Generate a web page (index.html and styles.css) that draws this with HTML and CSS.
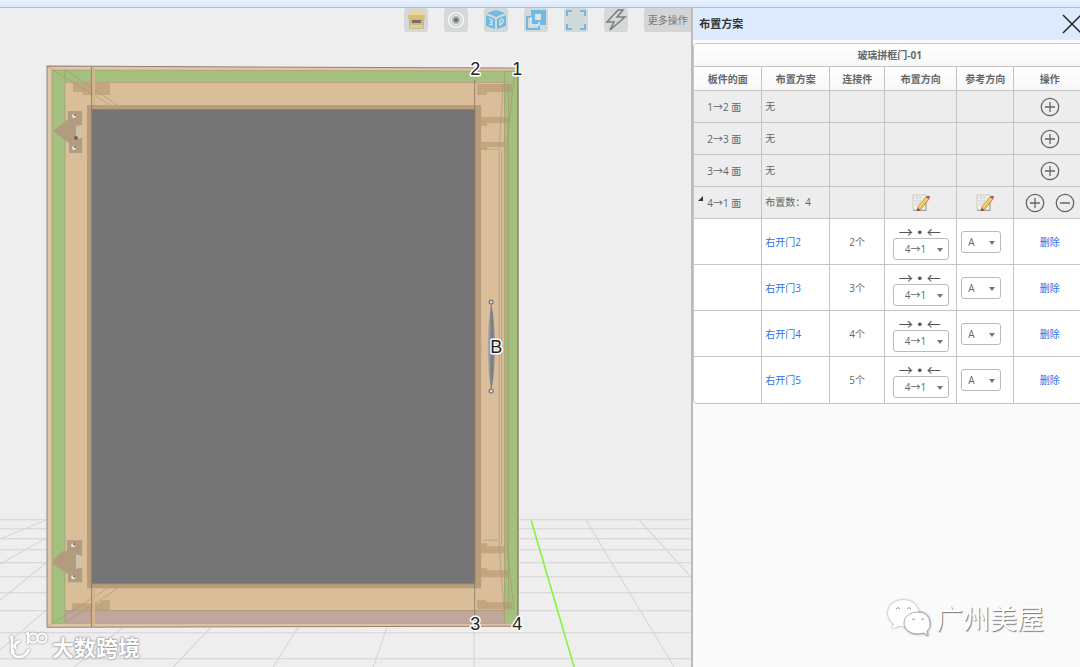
FILE: index.html
```html
<!doctype html>
<html lang="zh-CN">

<head>
    <meta charset="UTF-8" />
    <meta name="viewport" content="width=device-width, initial-scale=1.0" />
    <title>布置方案</title>
    <link rel="stylesheet" href="styles.css">
</head>

<body>
    <!-- shared symbols -->
    <svg class="symbols" aria-hidden="true">
        <symbol id="icon-plus" viewBox="0 0 20 20">
            <circle cx="10" cy="10" r="8.7" />
            <path d="M10 5v10M5 10h10" />
        </symbol>
        <symbol id="icon-minus" viewBox="0 0 20 20">
            <circle cx="10" cy="10" r="8.7" />
            <path d="M5 10h10" />
        </symbol>
        <symbol id="icon-edit" viewBox="0 0 20 20">
            <path d="M2 2h13v15H2z" fill="#f1f1ef" stroke="#c6c6c4" />
            <path d="M2 17.500h13M15 7v11" stroke="#a0a09e" />
            <path d="M3 5h9M3 8h8M3 11h6M6 3v11M9 3v8" stroke="#d6d6d4" />
            <path d="M7 14l8-10 3 2-8 10-4 2z" fill="#efc34f" stroke="#a98235" stroke-width=".8" />
            <path d="M8 14l8-9" stroke="#fbe69a" />
            <path d="M15 4l1-1q2-1 3 1l-1 2z" fill="#b9524e" />
            <path d="M6 18l1-3 2 2z" fill="#554535" />
        </symbol>
    </svg>

    <div class="topbar"></div>

    <div class="workspace">
        <main class="viewport">
            <svg class="scene" viewBox="0 8 691 659" preserveAspectRatio="xMinYMin slice" role="img" aria-label="玻璃拼框门">
                <!-- floor grid -->
                <g fill="none" stroke="#d3d3d3">
                    <path d="M0 519.500H691M0 528.500H691M0 538.500H691M0 549.500H691M0 562.500H691M0 576.500H691M0 592.500H691M0 610.500H691M0 632.500H691M0 658.500H691" />
                    <path d="M586 520L674 667M639 520L691 577M474 627V667M387 627L373 667M298 627L273 667M211 627L173 667M123 627L74 667M46 520L0 539M46 538L0 564M46 563L0 600M46 610L0 650" />
                </g>
                <path d="M531 520L574 667" stroke="#83f53d" stroke-width="1.600" />

                <!-- cabinet body -->
                <path d="M47 66L518 68V626L47 627z" fill="#e0c6a8" stroke="#94826f" />
                <path d="M52 70L518 71V622L504 623H52z" fill="#a4c07f" />
                <path d="M65 82H504V610H65z" fill="#dabe99" />
                <path d="M65 610H504V623H65z" fill="#c1a69b" />
                <g fill="none" stroke="#a58e6b" stroke-opacity=".7" stroke-width=".8">
                    <path d="M52 70L518 71M52 70V623M65 70V623M65 82.500H504M504.500 71V623M508.500 84V610M65 610.500H504M52 623.500H518" />
                    <path d="M48 67L110 105M66 70L117 105M48 626L108 588M66 622L118 588M514 78L507 140V550L514 610M503 84L499 150V545L504 612M501.500 150V545M483 149H498M483 540H498" />
                </g>
                <path d="M517.500 68V626" stroke="#7f8b66" />

                <!-- connectors -->
                <g fill="#b1966f" fill-opacity=".6">
                    <path d="M73 83H110V92H73zM83 92H110V95H83zM72 603H100V600H110V610H72zM477 84H512V92H487V95H477zM481 117H508V123H487V126H481zM481 142H505V147H487V150H481zM481 548V543H487V546H505V553H481zM481 568H487V570H508V577H481zM477 600H486V602H512V609H477z" />
                </g>

                <!-- glass panel -->
                <path d="M87 105H481V588H87z" fill="#b89c7b" />
                <path d="M92 110H475V583H92z" fill="#757575" />
                <path d="M91.500 67V627M474.500 80V626M91 109.500H475M91 583.500H475" fill="none" stroke="#8c7760" stroke-width=".8" />
                <path d="M92 67H95V105H92zM92 588H95V626H92z" fill="#d3b590" />

                <!-- hinges -->
                <g fill="#b19c80">
                    <path d="M68 111H82V125H78L80 138H82V153H69V143L53 131L68 119z" />
                    <path d="M67 540H82V555L78 560L76 568H82V582H68V574L53 564V560L62 551H67z" />
                </g>
                <path d="M76 125L81 130L80 138L76 140zM76 554L82 556L79 567L76 569z" fill="#cfc3ae" />
                <g fill="#ebe4d7">
                    <circle cx="74" cy="116" r="2" />
                    <circle cx="74" cy="148" r="2" />
                    <circle cx="73" cy="545" r="2" />
                    <circle cx="73" cy="577" r="2" />
                </g>
                <g fill="#6e6253">
                    <circle cx="75" cy="115" r="1" />
                    <circle cx="76" cy="138" r="2" />
                    <circle cx="75" cy="147" r="1" />
                    <circle cx="74" cy="544" r="1" />
                    <circle cx="74" cy="576" r="1" />
                </g>

                <!-- handle -->
                <defs>
                    <linearGradient id="steel">
                        <stop offset="0" stop-color="#b7b1a8" />
                        <stop offset=".6" stop-color="#77787a" />
                        <stop offset="1" stop-color="#a5a29c" />
                    </linearGradient>
                </defs>
                <path d="M491 302Q499 347 491 392Q484 347 491 302z" fill="url(#steel)" />
                <g fill="#ddd" stroke="#666">
                    <circle cx="491" cy="302" r="2" />
                    <circle cx="491" cy="391" r="2" />
                </g>

                <g class="marks">
                    <text x="475" y="75">2</text>
                    <text x="517" y="75">1</text>
                    <text x="475" y="630">3</text>
                    <text x="517" y="630">4</text>
                    <text x="496" y="353">B</text>
                </g>
            </svg>

            <div class="toolbar">
                <button type="button" class="tool" aria-label="柜体">
                    <svg viewBox="0 0 24 24">
                        <path d="M5 4l2-2h11l2 2v6H4z" fill="#ead6a0" />
                        <path d="M4 7h17v4H4z" fill="#d8bc78" />
                        <path d="M5 11h15v10H5z" fill="#cbb98c" />
                        <path d="M8 12h9v3H8z" fill="#75705f" />
                        <path d="M6 17h13v3H6z" fill="#ddcda2" />
                    </svg>
                </button>
                <button type="button" class="tool" aria-label="视角">
                    <svg viewBox="0 0 24 24">
                        <circle cx="12" cy="12" r="7.500" fill="none" stroke="#f2f4f4" stroke-width="1.500" />
                        <circle cx="12" cy="12" r="4.500" fill="#a9b0b1" stroke="#eef0f0" />
                        <circle cx="12" cy="12" r="2" fill="#666e70" />
                    </svg>
                </button>
                <button type="button" class="tool" aria-label="三维">
                    <svg viewBox="0 0 24 24">
                        <path d="M3 5l9-3 9 3-9 4zM2 7l9 4v10l-9-3zM22 7l-9 4v10l9-3z" fill="#6fb9e3" />
                        <path d="M5 11l3 1v2l-2 0 2 1v2l-3-1M16 12l2-1q2 1 1 3t-3 3z" fill="none" stroke="#d9e8ee" stroke-width="1.200" />
                    </svg>
                </button>
                <button type="button" class="tool" aria-label="图层">
                    <svg viewBox="0 0 24 24">
                        <path d="M7 2h15v15H7z" fill="#6fb9e3" />
                        <path d="M11 6h6v6h-6z" fill="#dce5e7" />
                        <path d="M7 9H3v12h12v-5" fill="none" stroke="#6fb9e3" stroke-width="2" />
                        <path d="M7 9v8h8v-3" fill="none" stroke="#e4eef1" stroke-width="1.500" />
                    </svg>
                </button>
                <button type="button" class="tool" aria-label="全屏">
                    <svg viewBox="0 0 24 24">
                        <path d="M3 8V3h5M16 3h5v5M21 16v5h-5M8 21H3v-5" fill="none" stroke="#6fb9e3" stroke-width="2" />
                    </svg>
                </button>
                <button type="button" class="tool" aria-label="快速">
                    <svg viewBox="0 0 24 24">
                        <path d="M14 2L3 14h7L6 22 21 9h-8l6-7z" fill="none" stroke="#7a7d7d" stroke-width="1.500" />
                    </svg>
                </button>
                <button type="button" class="tool tool-more">更多操作</button>
            </div>

            <div class="watermark watermark-left">
                <svg viewBox="0 0 40 30">
                    <path d="M2 7l2-1v17M12 10q-8 3-4 8M5 18q-1 8 6 8t10-8" fill="none" stroke="#fff" stroke-width="2.500" />
                    <path d="M18 3l2-1v11" fill="none" stroke="#fff" stroke-width="2" />
                    <circle cx="25" cy="7" r="4.500" fill="none" stroke="#fff" stroke-width="2" />
                    <circle cx="34" cy="7" r="4.500" fill="none" stroke="#fff" stroke-width="2" />
                </svg>
                <span>大数跨境</span>
            </div>
        </main>

        <aside class="panel">
            <header class="panel-header">
                <h1>布置方案</h1>
                <button type="button" class="close" aria-label="关闭">
                    <svg viewBox="0 0 20 20">
                        <path d="M1 1l18 18M19 1L1 19" />
                    </svg>
                </button>
            </header>

            <div class="table-wrap">
                <table>
                    <colgroup>
                        <col class="col-face">
                        <col class="col-plan">
                        <col class="col-count">
                        <col class="col-dir">
                        <col class="col-ref">
                        <col class="col-action">
                    </colgroup>
                    <thead>
                        <tr>
                            <th colspan="6">玻璃拼框门-01</th>
                        </tr>
                        <tr>
                            <th>板件的面</th>
                            <th>布置方案</th>
                            <th>连接件</th>
                            <th>布置方向</th>
                            <th>参考方向</th>
                            <th>操作</th>
                        </tr>
                    </thead>
                    <tbody>
                        <tr class="face-row">
                            <td class="face">1→2 面</td>
                            <td class="plan">无</td>
                            <td></td>
                            <td></td>
                            <td></td>
                            <td><button type="button" class="round" aria-label="添加"><svg><use href="#icon-plus" /></svg></button></td>
                        </tr>
                        <tr class="face-row">
                            <td class="face">2→3 面</td>
                            <td class="plan">无</td>
                            <td></td>
                            <td></td>
                            <td></td>
                            <td><button type="button" class="round" aria-label="添加"><svg><use href="#icon-plus" /></svg></button></td>
                        </tr>
                        <tr class="face-row">
                            <td class="face">3→4 面</td>
                            <td class="plan">无</td>
                            <td></td>
                            <td></td>
                            <td></td>
                            <td><button type="button" class="round" aria-label="添加"><svg><use href="#icon-plus" /></svg></button></td>
                        </tr>
                        <tr class="face-row">
                            <td class="face open">4→1 面</td>
                            <td class="plan">布置数：4</td>
                            <td></td>
                            <td><button type="button" class="edit" aria-label="编辑布置方向"><svg><use href="#icon-edit" /></svg></button></td>
                            <td><button type="button" class="edit" aria-label="编辑参考方向"><svg><use href="#icon-edit" /></svg></button></td>
                            <td>
                                <div class="actions">
                                    <button type="button" class="round" aria-label="添加"><svg><use href="#icon-plus" /></svg></button>
                                    <button type="button" class="round" aria-label="移除"><svg><use href="#icon-minus" /></svg></button>
                                </div>
                            </td>
                        </tr>
                        <tr class="item-row">
                            <td></td>
                            <td class="plan"><a href="#door2">右开门2</a></td>
                            <td>2个</td>
                            <td>
                                <div class="arrows"><span>→</span><b>·</b><span>←</span></div>
                                <div class="select select-dir"><select aria-label="布置方向"><option>4→1</option></select></div>
                            </td>
                            <td class="ref"><div class="select select-ref"><select aria-label="参考方向"><option>A</option></select></div></td>
                            <td><a href="#delete2">删除</a></td>
                        </tr>
                        <tr class="item-row">
                            <td></td>
                            <td class="plan"><a href="#door3">右开门3</a></td>
                            <td>3个</td>
                            <td>
                                <div class="arrows"><span>→</span><b>·</b><span>←</span></div>
                                <div class="select select-dir"><select aria-label="布置方向"><option>4→1</option></select></div>
                            </td>
                            <td class="ref"><div class="select select-ref"><select aria-label="参考方向"><option>A</option></select></div></td>
                            <td><a href="#delete3">删除</a></td>
                        </tr>
                        <tr class="item-row">
                            <td></td>
                            <td class="plan"><a href="#door4">右开门4</a></td>
                            <td>4个</td>
                            <td>
                                <div class="arrows"><span>→</span><b>·</b><span>←</span></div>
                                <div class="select select-dir"><select aria-label="布置方向"><option>4→1</option></select></div>
                            </td>
                            <td class="ref"><div class="select select-ref"><select aria-label="参考方向"><option>A</option></select></div></td>
                            <td><a href="#delete4">删除</a></td>
                        </tr>
                        <tr class="item-row">
                            <td></td>
                            <td class="plan"><a href="#door5">右开门5</a></td>
                            <td>5个</td>
                            <td>
                                <div class="arrows"><span>→</span><b>·</b><span>←</span></div>
                                <div class="select select-dir"><select aria-label="布置方向"><option>4→1</option></select></div>
                            </td>
                            <td class="ref"><div class="select select-ref"><select aria-label="参考方向"><option>A</option></select></div></td>
                            <td><a href="#delete5">删除</a></td>
                        </tr>
                    </tbody>
                </table>
            </div>

            <div class="watermark watermark-right">
                <svg viewBox="0 0 44 38">
                    <path d="M16 1C7 1 1 7 1 14q0 7 6 11l-2 5 7-3q15 2 20-9Q32 1 16 1z" fill="#fff" />
                    <path d="M31 13c-8 0-14 5-14 11s6 11 14 11l6-1 4 3-1-5q4-3 3-8-1-11-12-11z" fill="#fff" stroke="#a8a8a8" />
                    <g fill="none" stroke="#999">
                        <path d="M9 10q2-3 4 0M20 10q2-3 4 0M25 21q2-3 3 0M34 21q2-3 3 0" />
                    </g>
                </svg>
                <span>广州美屋</span>
            </div>
        </aside>
    </div>
</body>

</html>
```
FILE: styles.css
```css
:root {
    --line: #c4c4c4;
    --text: #666;
    --link: #2b70e8;
    --bar: #deebff;
}

* {
    margin: 0;
    padding: 0;
    box-sizing: border-box;
}

body {
    display: flex;
    flex-direction: column;
    height: 100vh;
    overflow: hidden;
    background: #eee;
    color: var(--text);
    font-family: "Open Sans", "Noto Sans CJK SC", sans-serif;
    font-size: 10px;
    line-height: 14px;
}

button,
select {
    font: inherit;
    color: inherit;
    border: none;
    background: none;
}

button {
    cursor: pointer;
}

a {
    color: var(--link);
    text-decoration: none;
}

.symbols {
    position: absolute;
    width: 0;
    height: 0;
}

.topbar {
    flex: none;
    height: 8px;
    background: linear-gradient(#e8f1ff, #dce9fc);
    border-bottom: 1px solid #a9bfdc;
}

.workspace {
    display: flex;
    flex: 1;
    min-height: 0;
}

/* 3D view */
.viewport {
    position: relative;
    flex: 1;
    min-width: 0;
    overflow: hidden;
}

.scene {
    display: block;
    width: 100%;
    height: 100%;
}

.marks {
    font-family: "Liberation Sans", sans-serif;
    font-size: 18px;
    text-anchor: middle;
    fill: #222;
    stroke: #fff;
    stroke-width: 3px;
    stroke-linejoin: round;
    paint-order: stroke;
}

.toolbar {
    position: absolute;
    top: 0;
    right: 0;
    display: flex;
    gap: 16px;
}

.tool {
    width: 24px;
    height: 24px;
    border-radius: 3px;
    background: #d2d9d8;
}

.tool svg {
    display: block;
    width: 24px;
    height: 24px;
}

.tool-more {
    width: 47px;
    border-radius: 3px 0 0 3px;
    background: #d5d5d5;
    color: #777;
    white-space: nowrap;
}

/* side panel */
.panel {
    position: relative;
    flex: none;
    width: 36%;
    overflow: hidden;
    background: #fafafa;
    border-left: 2px solid #bbb;
}

.panel-header {
    display: flex;
    align-items: center;
    justify-content: space-between;
    height: 32px;
    padding-left: 6px;
    background: var(--bar);
}

.panel-header h1 {
    color: #333;
    font-size: 11px;
}

.close {
    flex: none;
    width: 18px;
    height: 20px;
    overflow: hidden;
}

.close svg {
    display: block;
    width: 20px;
    height: 20px;
    fill: none;
    stroke: #222;
    stroke-width: 1.5px;
}

.table-wrap {
    padding-top: 3px;
}

table {
    width: 394px;
    table-layout: fixed;
    border-collapse: separate;
    border-spacing: 0;
    border: 1px solid var(--line);
    border-radius: 4px;
    overflow: hidden;
    background: #fff;
}

.col-face,
.col-plan {
    width: 68px;
}

.col-count {
    width: 55px;
}

.col-dir {
    width: 72px;
}

.col-ref {
    width: 57px;
}

th,
td {
    border-right: 1px solid var(--line);
    border-bottom: 1px solid var(--line);
    text-align: center;
    vertical-align: middle;
}

tbody tr:last-child td {
    border-bottom: none;
}

th {
    height: 23px;
    background: linear-gradient(#fff, #f7f7f7);
    color: #666;
    font-weight: bold;
}

thead tr:last-child th {
    height: 24px;
}

.face-row td {
    height: 32px;
    background: #ededed;
}

.item-row td {
    height: 46px;
}

.face-row .face {
    padding-left: 13px;
    text-align: left;
}

.face-row .open {
    padding-left: 4px;
}

.open::before {
    content: "";
    float: left;
    margin-right: 4px;
    border-left: 5px solid transparent;
    border-bottom: 5px solid #333;
}

td.plan {
    padding-left: 3px;
    text-align: left;
}

.face-row .plan {
    padding-bottom: 2px;
}

.round,
.edit {
    display: inline-block;
    width: 20px;
    height: 20px;
    vertical-align: middle;
}

.round svg,
.edit svg {
    display: block;
    width: 20px;
    height: 20px;
    fill: none;
}

.round svg {
    stroke: #666;
    stroke-width: 1.3px;
}

.actions {
    display: flex;
    justify-content: center;
    gap: 10px;
}

.arrows {
    display: flex;
    justify-content: center;
    height: 14px;
    padding-right: 2px;
    color: #555;
    font-family: "Noto Sans CJK SC", sans-serif;
    font-size: 14px;
}

.select {
    position: relative;
    display: block;
    border: 1px solid #bbb;
    border-radius: 3px;
    background: #fff;
}

.select::after {
    content: "";
    position: absolute;
    top: 9px;
    right: 5px;
    border: 3px solid transparent;
    border-top: 4px solid #777;
    border-bottom: none;
    pointer-events: none;
}

.select select {
    display: block;
    width: 100%;
    height: 20px;
    appearance: none;
}

.select-dir {
    width: 56px;
    margin: 0 auto;
}

.select-dir select {
    padding-left: 11px;
}

.select-ref {
    width: 40px;
    margin-left: 4px;
}

.select-ref select {
    padding-left: 6px;
}

/* watermarks */
.watermark {
    position: absolute;
    display: flex;
    align-items: center;
    color: #fff;
    font-family: "Noto Sans CJK SC", sans-serif;
    white-space: nowrap;
}

.watermark svg {
    filter: drop-shadow(0 0 1px #888);
}

.watermark-left {
    left: 8px;
    bottom: 6px;
    gap: 4px;
    font-size: 22px;
    font-weight: bold;
    line-height: 30px;
    text-shadow: 0 0 2px #777, 0 0 2px #999;
}

.watermark-left svg {
    width: 40px;
    height: 30px;
}

.watermark-right {
    right: 36px;
    bottom: 30px;
    gap: 5px;
    font-size: 27px;
    line-height: 38px;
    text-shadow: 1px 1px 1px #777;
}

.watermark-right svg {
    width: 44px;
    height: 38px;
}
```
